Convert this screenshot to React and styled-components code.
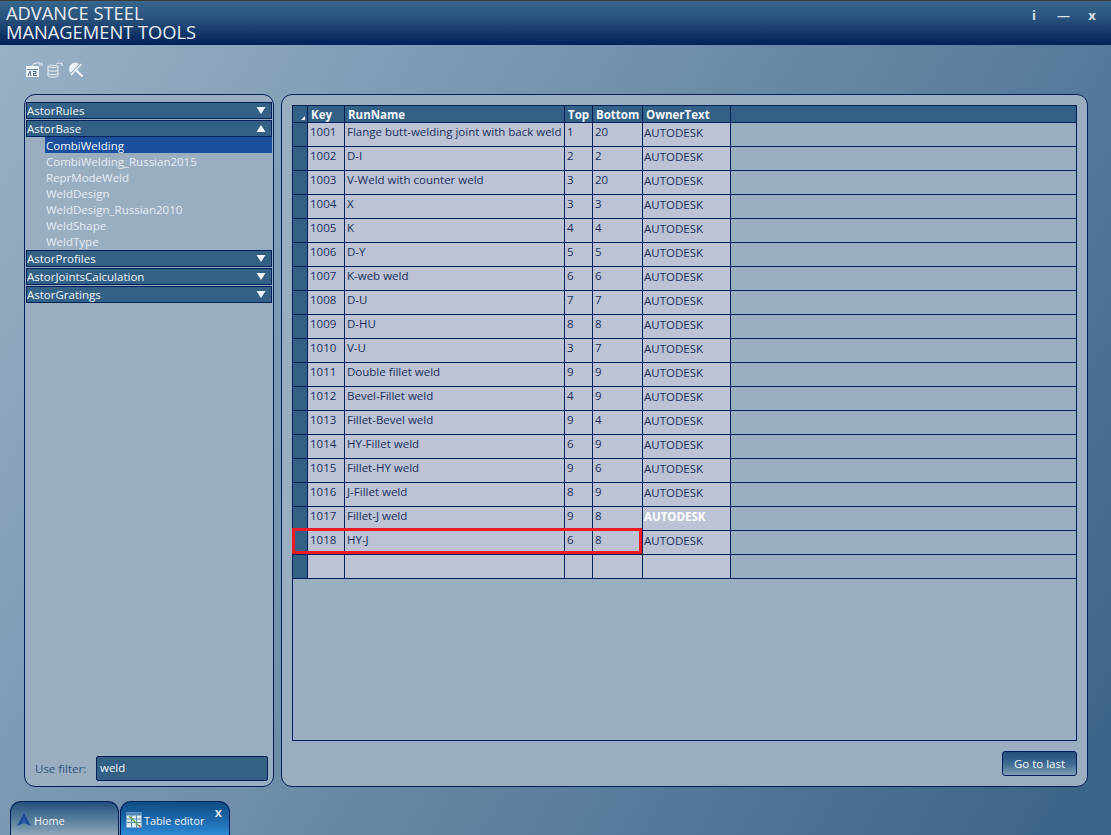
import React from 'react';
import styled, { createGlobalStyle } from 'styled-components';

const FONT = '"Open Sans", "Noto Sans", sans-serif';
const LINE = '#02215a';

const GlobalStyle = createGlobalStyle`
  html, body {
    margin: 0;
    padding: 0;
    overflow: hidden;
  }
  * {
    box-sizing: border-box;
  }
`;

const Page = styled.div`
  width: 1111px;
  height: 835px;
  display: flex;
  flex-direction: column;
  font-family: ${FONT};
  background: linear-gradient(121deg, #9ab2c6 0%, #386286 100%);
  overflow: hidden;
`;

const TitleBar = styled.header`
  height: 45px;
  flex: none;
  display: flex;
  justify-content: space-between;
  border-top: 1px solid #3a3a3a;
  background: linear-gradient(180deg, #37658b 0%, #28527a 40%, #02215a 100%);
`;

const AppTitle = styled.h1`
  margin: 2px 0 0 6px;
  font-size: 18.3px;
  line-height: 19px;
  font-weight: 400;
  color: #e8eef4;
`;

const WindowButtons = styled.div`
  display: flex;
  gap: 17px;
  padding: 6px 13px 0 0;
  align-items: flex-start;
`;

const WindowButton = styled.span`
  width: 12px;
  text-align: center;
  font-size: 13px;
  line-height: 16px;
  font-weight: 700;
  color: #d8e2ea;
`;

const Toolbar = styled.div`
  height: 49px;
  flex: none;
  display: flex;
  align-items: flex-start;
  gap: 4px;
  padding: 17px 0 0 26px;
`;

const Main = styled.main`
  height: 693px;
  flex: none;
  display: flex;
  gap: 7px;
  padding: 0 0 0 24px;
`;

const Panel = styled.section`
  width: ${({ $width }) => $width}px;
  height: 693px;
  display: flex;
  flex-direction: column;
  border: 1px solid ${LINE};
  border-radius: 11px;
  background: #9aaec2;
`;

const LeftPanel = styled(Panel)`
  padding: 7px 1px 5px 1px;
`;

const RightPanel = styled(Panel)`
  padding: 10px 10px 10px 10px;
`;

const GroupHeader = styled.div`
  height: 17px;
  flex: none;
  margin-bottom: ${({ $gap }) => $gap}px;
  display: flex;
  align-items: center;
  justify-content: space-between;
  padding: 0 5px 0 0;
  background: #336186;
  border: 1px solid ${LINE};
  color: #eef3f7;
  font-size: 11.5px;
  line-height: 15px;
`;

const GroupItems = styled.div`
  margin-bottom: 1px;
`;

const GroupItem = styled.div`
  height: 16px;
  margin-left: 19px;
  padding: 1px 0 0 1px;
  font-size: 11.5px;
  line-height: 16px;
  color: ${({ $selected }) => ($selected ? '#f0f5fa' : '#e6ecf2')};
  background: ${({ $selected }) => ($selected ? '#1b4e9b' : 'transparent')};
`;

const Spacer = styled.div`
  flex: 1;
`;

const FilterRow = styled.div`
  display: flex;
  align-items: center;
  justify-content: space-between;
  padding: 0 4px 0 9px;
`;

const FilterLabel = styled.span`
  flex: none;
  white-space: nowrap;
  font-size: 11.5px;
  color: #2c5478;
`;

const FilterInput = styled.div`
  flex: none;
  width: 172px;
  height: 25px;
  padding: 2px 3px;
  border: 1px solid ${LINE};
  border-radius: 2px;
  background: #336186;
  color: #f0f5fa;
  font-size: 11.5px;
  font-weight: 500;
  line-height: 18px;
`;

const GridFrame = styled.div`
  position: relative;
  height: 636px;
  flex: none;
  border: 1px solid ${LINE};
`;

const Row = styled.div`
  display: grid;
  grid-template-columns: 15px 37px 220px 28px 50px 88px 1fr;
  height: ${({ $header }) => ($header ? 17 : 24)}px;
  border-bottom: 1px solid ${LINE};
  background: ${({ $header }) => ($header ? '#336186' : 'transparent')};
`;

const Cell = styled.div`
  border-right: 1px solid ${LINE};
  padding: 1px 0 0 2px;
  font-size: 11.5px;
  line-height: 16px;
  white-space: nowrap;
  overflow: hidden;
  color: #1a2f5c;
  background: #bdc3d5;
`;

const OwnerCell = styled(Cell)`
  padding: 2px 0 0 1px;
  color: ${({ $strong }) => ($strong ? '#ffffff' : '#1a2f5c')};
  font-weight: ${({ $strong }) => ($strong ? 700 : 400)};
`;

const RowHead = styled.div`
  border-right: 1px solid ${LINE};
  background: #336186;
`;

const SortHead = styled(RowHead)`
  display: flex;
  align-items: flex-end;
  justify-content: flex-end;
  padding: 0 2px 2px 0;
`;

const HeadCell = styled.div`
  border-right: 1px solid ${LINE};
  padding: 1px 0 0 3px;
  font-size: 11.5px;
  line-height: 16px;
  font-weight: 700;
  color: #f4f7fa;
  white-space: nowrap;
  overflow: hidden;
`;

const Filler = styled.div``;

const NewRowMark = styled.div`
  position: absolute;
  left: -1px;
  top: 422px;
  width: 350px;
  height: 26px;
  border: 3px solid #ed1c24;
  pointer-events: none;
`;

const Footer = styled.div`
  flex: 1;
  display: flex;
  justify-content: flex-end;
  align-items: flex-start;
  padding-top: 10px;
`;

const GoButton = styled.button`
  width: 75px;
  height: 25px;
  padding: 0;
  border: 1px solid ${LINE};
  border-radius: 3px;
  background: linear-gradient(180deg, #234f78 0%, #3d6b90 50%, #7d9cb5 100%);
  color: #f2f7fb;
  font-family: ${FONT};
  font-size: 11.5px;
`;

const TabBar = styled.nav`
  flex: 1;
  display: flex;
  align-items: flex-end;
  padding-left: 10px;
  gap: 1px;
`;

const Tab = styled.div`
  position: relative;
  width: ${({ $active }) => ($active ? 110 : 109)}px;
  height: 34px;
  display: flex;
  align-items: center;
  gap: 2px;
  padding: 3px 0 0 5px;
  border: 1px solid ${LINE};
  border-bottom: none;
  border-radius: 11px 11px 0 0;
  color: #f0f5fa;
  font-size: 10.8px;
  background: ${({ $active }) =>
    $active
      ? 'linear-gradient(180deg, #0f4c84 0%, #1d69ad 55%, #2d8bd6 100%)'
      : 'linear-gradient(180deg, #24507a 0%, #547b9b 50%, #8ea7bc 100%)'};
`;

const TabClose = styled.span`
  position: absolute;
  top: 3px;
  right: 7px;
  font-size: 13px;
  line-height: 14px;
  font-weight: 600;
  color: #eef3f7;
`;

const Arrow = ({ up }) => (
  <svg width="10" height="9" viewBox="0 0 10 9">
    <path d={up ? 'M5 1 L9.5 8 H0.5 Z' : 'M0.5 1 H9.5 L5 8 Z'} fill="#f2f6fa" />
  </svg>
);

const RulesIcon = () => (
  <svg width="17" height="16" viewBox="0 0 17 16" fill="none">
    <path d="M0 4 H13 V15 H0 Z" fill="#eef3f7" />
    <path d="M1 7.5 H12" stroke="#6f8ca5" strokeWidth="1" />
    <path d="M2 14 L4 9 L5 14 M7 9.5 H10 V11.5 H7.5 V13.5 H11" stroke="#4a6a86" strokeWidth="1" />
    <path d="M6 4 C7 1.5 10 0.5 14 1 V3.5" stroke="#eef3f7" strokeWidth="1" />
    <path d="M15 1 H16 V4" stroke="#eef3f7" strokeWidth="1" />
  </svg>
);

const DatabaseIcon = () => (
  <svg width="17" height="16" viewBox="0 0 17 16" fill="none" stroke="#eef3f7" strokeWidth="1">
    <path d="M1 4.5 C1 3 11 3 11 4.5 V14 C11 15.5 1 15.5 1 14 Z" />
    <path d="M1 4.5 C1 6 11 6 11 4.5" />
    <path d="M1 8 C1 9.5 11 9.5 11 8 M1 11.5 C1 13 11 13 11 11.5" />
    <path d="M9 2.5 C10.5 0.8 13 0.8 15 1.5 M15 1 V4" />
  </svg>
);

const WeldIcon = () => (
  <svg width="16" height="16" viewBox="0 0 16 16" fill="none">
    <path d="M8 0.5 C4 0.5 1 3.5 1 7 C1 8.5 1.5 10 2.5 11 L11 2 C10 1 9 0.5 8 0.5 Z" fill="#eef3f7" />
    <path d="M3 13 L13.5 2" stroke="#eef3f7" strokeWidth="1.3" />
    <path d="M7.5 7.5 L14.5 14.5" stroke="#eef3f7" strokeWidth="2.4" />
  </svg>
);

const HomeLogo = () => (
  <svg width="16" height="16" viewBox="0 0 16 16">
    <path d="M8 1 L15 14 L8 11 L1 14 Z" fill="#1c4a93" />
    <path d="M8 5 L10.5 12 L8 11 L5.5 12 Z" fill="#2c5fae" />
  </svg>
);

const TableIcon = () => (
  <svg width="16" height="16" viewBox="0 0 16 16" fill="none">
    <rect x="0.5" y="0.5" width="15" height="15" fill="#dfe9f2" />
    <rect x="0.5" y="0.5" width="15" height="3" fill="#4a86b8" />
    <path d="M0.5 7 H15.5 M0.5 10.5 H15.5 M5.5 0.5 V15.5 M10.5 0.5 V15.5" stroke="#5a8fb8" />
    <path d="M3 4 L13 14" stroke="#5aa845" strokeWidth="1.2" />
    <path d="M13 13.5 L15 15.5" stroke="#d0554a" strokeWidth="1.2" />
  </svg>
);

const groups = [
  { name: 'AstorRules', gap: 1 },
  {
    name: 'AstorBase',
    open: true,
    gap: 0,
    items: [
      'CombiWelding',
      'CombiWelding_Russian2015',
      'ReprModeWeld',
      'WeldDesign',
      'WeldDesign_Russian2010',
      'WeldShape',
      'WeldType',
    ],
  },
  { name: 'AstorProfiles', gap: 1 },
  { name: 'AstorJointsCalculation', gap: 1 },
  { name: 'AstorGratings', gap: 0 },
];

const rows = [
  ['1001', 'Flange butt-welding joint with back weld', '1', '20'],
  ['1002', 'D-I', '2', '2'],
  ['1003', 'V-Weld with counter weld', '3', '20'],
  ['1004', 'X', '3', '3'],
  ['1005', 'K', '4', '4'],
  ['1006', 'D-Y', '5', '5'],
  ['1007', 'K-web weld', '6', '6'],
  ['1008', 'D-U', '7', '7'],
  ['1009', 'D-HU', '8', '8'],
  ['1010', 'V-U', '3', '7'],
  ['1011', 'Double fillet weld', '9', '9'],
  ['1012', 'Bevel-Fillet weld', '4', '9'],
  ['1013', 'Fillet-Bevel weld', '9', '4'],
  ['1014', 'HY-Fillet weld', '6', '9'],
  ['1015', 'Fillet-HY weld', '9', '6'],
  ['1016', 'J-Fillet weld', '8', '9'],
  ['1017', 'Fillet-J weld', '9', '8'],
  ['1018', 'HY-J', '6', '8'],
];

const App = () => (
  <Page>
    <GlobalStyle />
    <TitleBar>
      <AppTitle>
        ADVANCE STEEL
        <br />
        MANAGEMENT TOOLS
      </AppTitle>
      <WindowButtons>
        <WindowButton>i</WindowButton>
        <WindowButton>—</WindowButton>
        <WindowButton>x</WindowButton>
      </WindowButtons>
    </TitleBar>
    <Toolbar>
      <RulesIcon />
      <DatabaseIcon />
      <WeldIcon />
    </Toolbar>
    <Main>
      <LeftPanel $width={250}>
        {groups.map((group) => (
          <React.Fragment key={group.name}>
            <GroupHeader $gap={group.gap}>
              {group.name}
              <Arrow up={group.open} />
            </GroupHeader>
            {group.items && (
              <GroupItems>
                {group.items.map((item, idx) => (
                  <GroupItem key={item} $selected={idx === 0}>
                    {item}
                  </GroupItem>
                ))}
              </GroupItems>
            )}
          </React.Fragment>
        ))}
        <Spacer />
        <FilterRow>
          <FilterLabel>Use filter:</FilterLabel>
          <FilterInput>weld</FilterInput>
        </FilterRow>
      </LeftPanel>
      <RightPanel $width={807}>
        <GridFrame>
          <Row $header>
            <SortHead>
              <svg width="4" height="4" viewBox="0 0 4 4">
                <path d="M4 0 V4 H0 Z" fill="#e8eef4" />
              </svg>
            </SortHead>
            <HeadCell>Key</HeadCell>
            <HeadCell>RunName</HeadCell>
            <HeadCell>Top</HeadCell>
            <HeadCell>Bottom</HeadCell>
            <HeadCell>OwnerText</HeadCell>
            <Filler />
          </Row>
          {rows.map(([key, name, top, bottom]) => (
            <Row key={key}>
              <RowHead />
              <Cell>{key}</Cell>
              <Cell>{name}</Cell>
              <Cell>{top}</Cell>
              <Cell>{bottom}</Cell>
              <OwnerCell $strong={key === '1017'}>AUTODESK</OwnerCell>
              <Filler />
            </Row>
          ))}
          <Row>
            <RowHead />
            <Cell />
            <Cell />
            <Cell />
            <Cell />
            <Cell />
            <Filler />
          </Row>
          <NewRowMark />
        </GridFrame>
        <Footer>
          <GoButton>Go to last</GoButton>
        </Footer>
      </RightPanel>
    </Main>
    <TabBar>
      <Tab>
        <HomeLogo />
        Home
      </Tab>
      <Tab $active>
        <TableIcon />
        Table editor
        <TabClose>x</TabClose>
      </Tab>
    </TabBar>
  </Page>
);

export default App;
